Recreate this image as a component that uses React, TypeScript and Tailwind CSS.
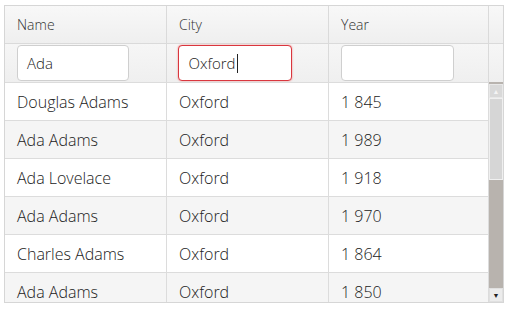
import React from 'react';

const rows = [
  { name: 'Douglas Adams', city: 'Oxford', year: '1 845' },
  { name: 'Ada Adams', city: 'Oxford', year: '1 989' },
  { name: 'Ada Lovelace', city: 'Oxford', year: '1 918' },
  { name: 'Ada Adams', city: 'Oxford', year: '1 970' },
  { name: 'Charles Adams', city: 'Oxford', year: '1 864' },
  { name: 'Ada Adams', city: 'Oxford', year: '1 850' },
];

const cols = ['w-[162px]', 'w-[162px]', 'w-[160px]'];

export default function App() {
  return (
    <div className="h-[311px] w-[507px] bg-white pl-[4px] pt-[5px]" style={{ fontFamily: '"Open Sans", sans-serif' }}>
      <div className="flex h-[298px] w-[500px] flex-col overflow-hidden border border-[#d6d6d6] text-[#333]">
        {/* header */}
        <div className="flex h-[38px] shrink-0 border-b border-[#dadada] bg-gradient-to-b from-[#f8f8f8] to-[#efefef]">
          {['Name', 'City', 'Year'].map((h, i) => (
            <div key={h} className={`${cols[i]} flex items-center border-r border-[#dadada] pl-[12px] text-[14px] font-light text-[#333]`}>
              {h}
            </div>
          ))}
          <div className="flex-1" />
        </div>

        {/* filters */}
        <div className="flex h-[38px] shrink-0 bg-gradient-to-b from-[#f6f6f6] to-[#efefef]">
          <div className={`${cols[0]} flex items-center border-r border-[#dadada] pl-[12px]`}>
            <div className="flex h-[36px] w-[112px] items-center rounded-[4px] border border-[#cfcfcf] bg-white pl-[9px] text-[15px] font-light text-[#222]">
              Ada
            </div>
          </div>
          <div className={`${cols[1]} flex items-center border-r border-[#dadada] pl-[11px]`}>
            <div className="flex h-[36px] w-[114px] items-center rounded-[4px] border-[1.5px] border-[#d9363e] bg-white pl-[9.5px] text-[15px] font-light text-[#222] shadow-[0_0_2px_#f08080]">
              Oxford<span className="ml-[1px] inline-block h-[19px] w-px bg-[#222]" />
            </div>
          </div>
          <div className={`${cols[2]} flex items-center border-r border-[#dadada] pl-[12px]`}>
            <div className="h-[36px] w-[113px] rounded-[4px] border border-[#cfcfcf] bg-white" />
          </div>
          <div className="flex-1" />
        </div>

        {/* body */}
        <div className="flex min-h-0 flex-1">
          <div className="flex-1 overflow-hidden">
            {rows.map((r, i) => (
              <div
                key={i}
                className={`flex h-[38px] border-t border-[#dcdcdc] text-[16px] font-light text-[#222] ${i % 2 ? 'bg-[#f5f5f5]' : 'bg-white'}`}
              >
                <div className={`${cols[0]} flex items-center border-r border-[#dcdcdc] pl-[12px]`}>{r.name}</div>
                <div className={`${cols[1]} flex items-center border-r border-[#dcdcdc] pl-[12px]`}>{r.city}</div>
                <div className="flex flex-1 items-center pl-[12px]">{r.year}</div>
              </div>
            ))}
          </div>
          {/* scrollbar */}
          <div className="flex w-[15px] flex-col border-l border-[#dcdcdc] bg-[#b8b3ae] pt-[2px]">
            <div className="flex h-[14px] items-center justify-center border border-[#e8e8e8] bg-[#d9d9d9]">
              <span className="text-[7px] leading-none text-[#f4f4f4]">▲</span>
            </div>
            <div className="h-[82px] border border-[#f0f0f0] bg-[#d6d6d6]" />
            <div className="flex-1" />
            <div className="flex h-[14px] items-center justify-center border border-[#e0e0e0] bg-[#ececec]">
              <span className="text-[7px] leading-none text-[#222]">▼</span>
            </div>
          </div>
        </div>
      </div>
    </div>
  );
}
